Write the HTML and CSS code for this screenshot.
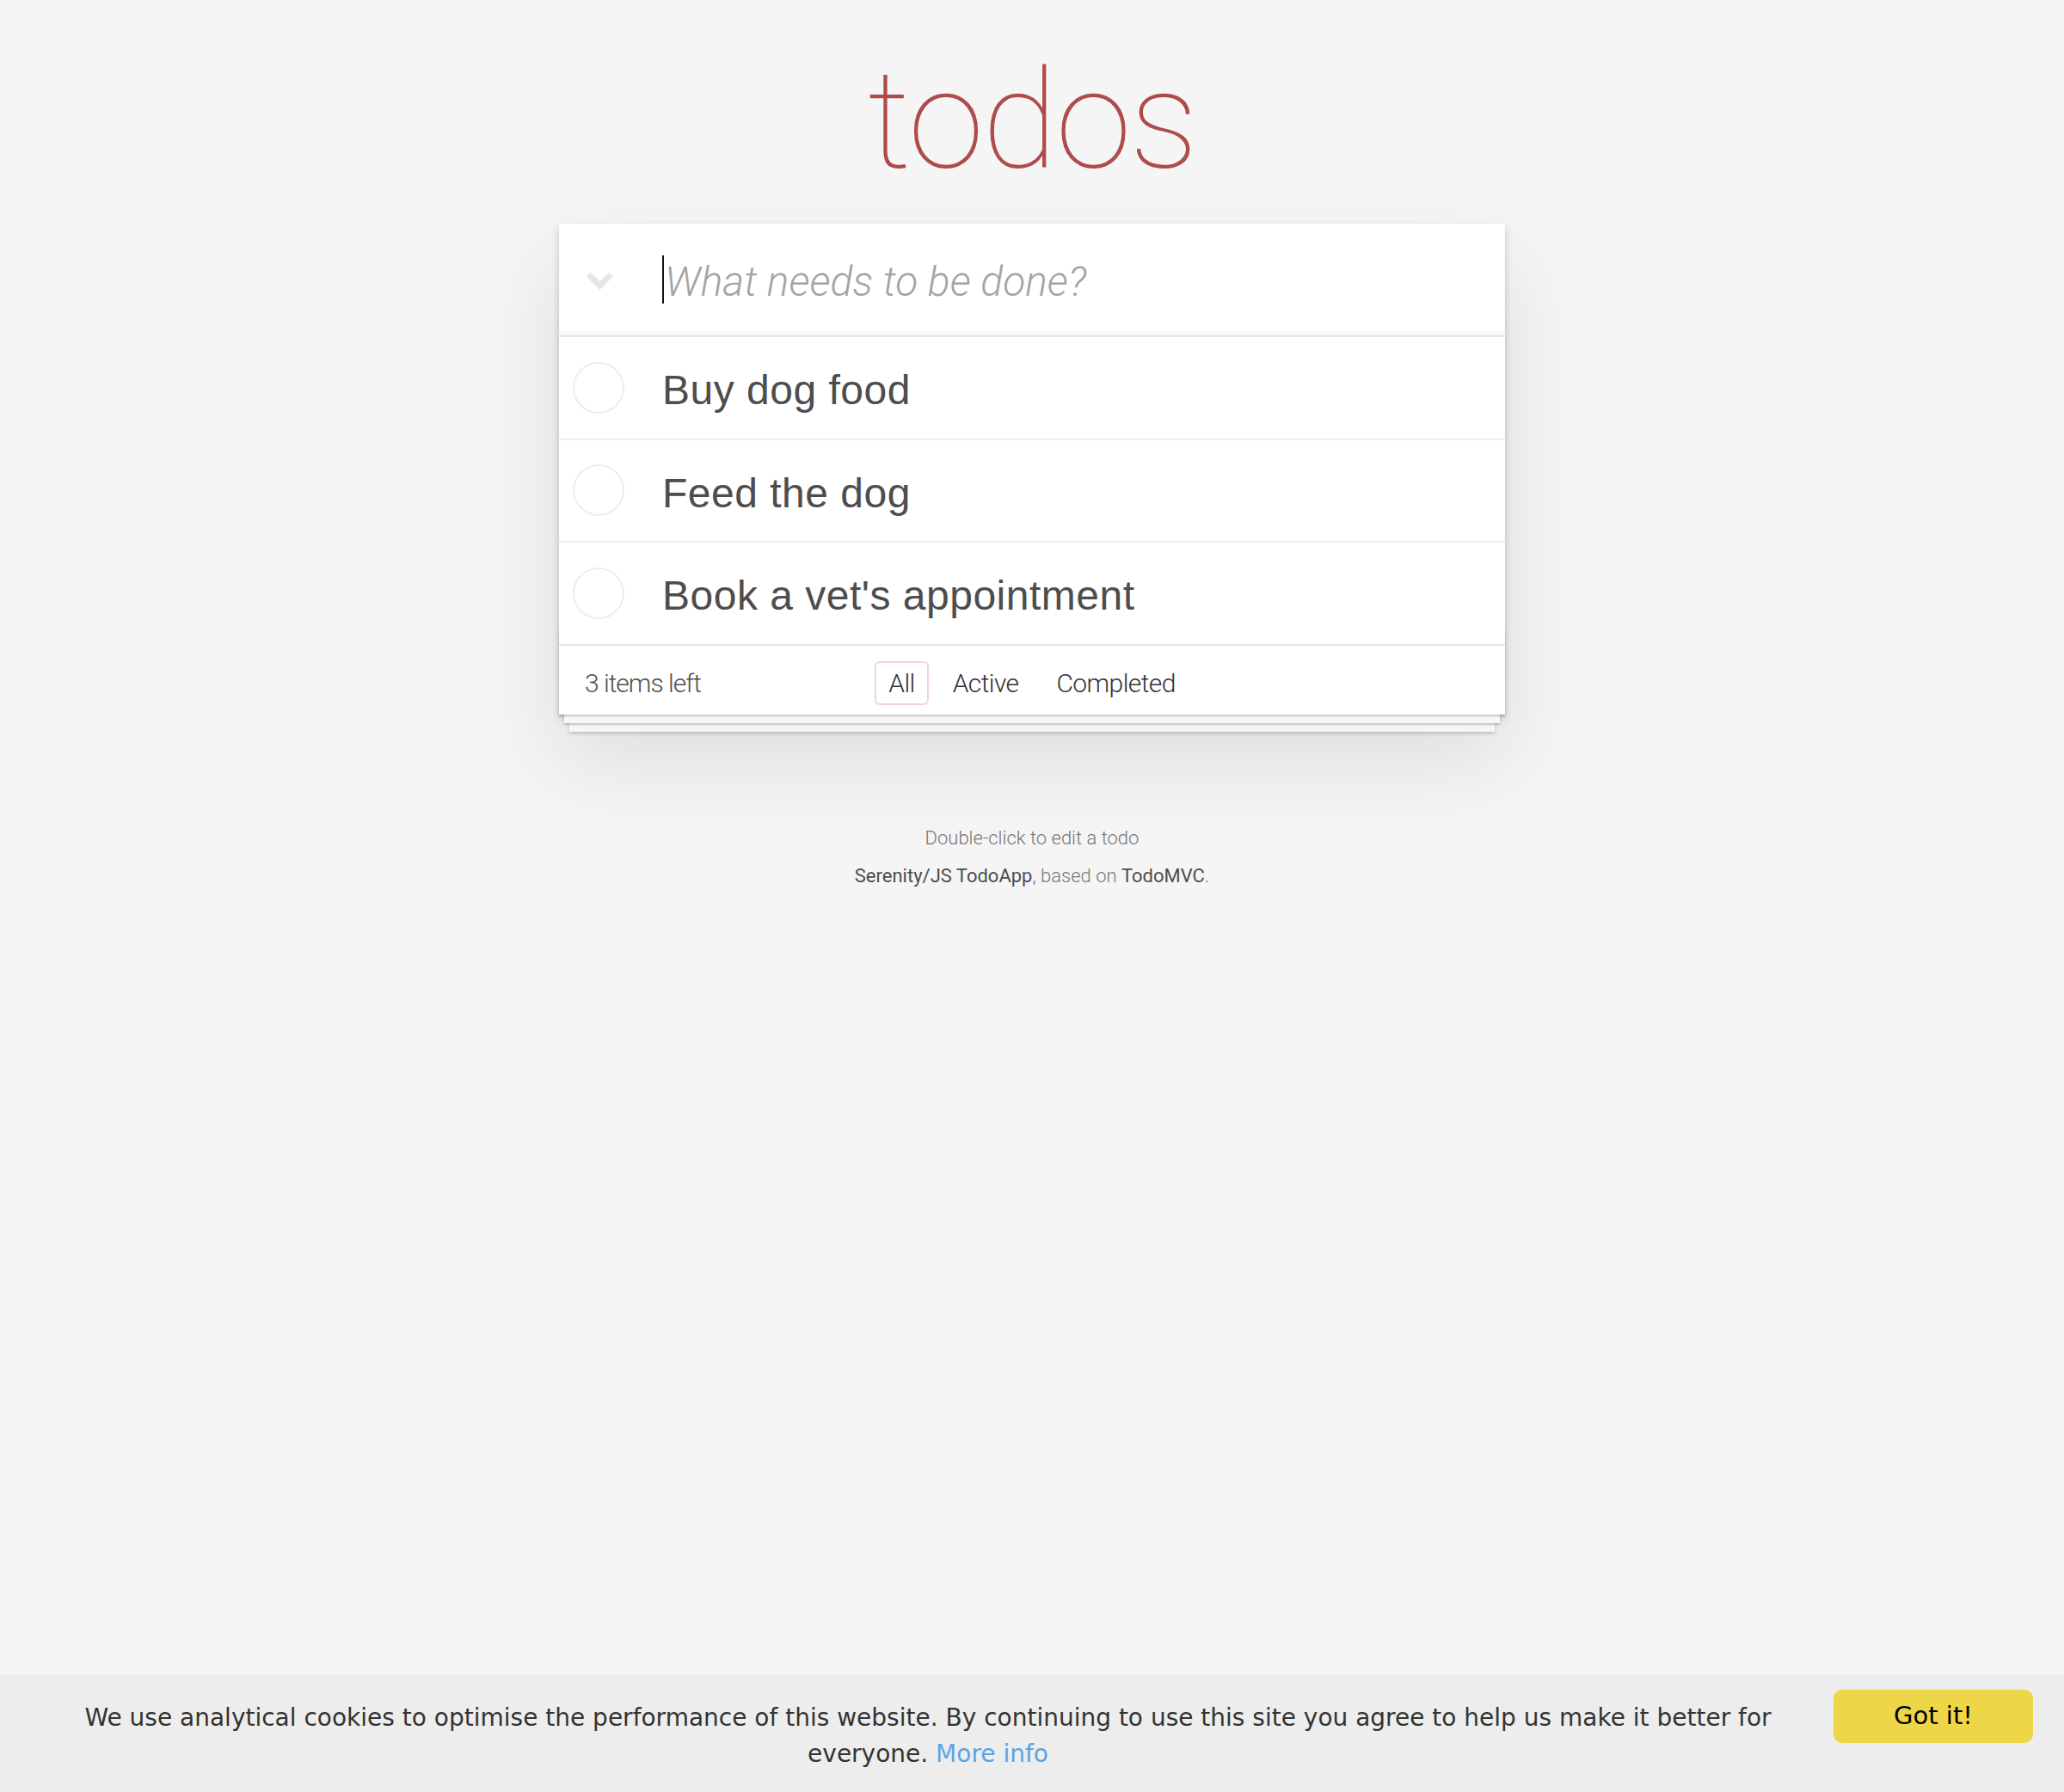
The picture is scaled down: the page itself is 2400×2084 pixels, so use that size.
FILE: index.html
```html
<!DOCTYPE html>
<html lang="en">
<head>
<meta charset="utf-8">
<title>Serenity/JS TodoApp</title>
<link rel="stylesheet" href="styles.css">
</head>
<body>
<div class="page">
  <h1 class="title">todos</h1>
  <section class="todoapp">
    <header class="header">
      <label class="toggle-all">
        <svg width="31" height="20" viewBox="0 0 31 20"><polygon points="0,4.5 4.5,0 15.5,10 26.5,0 31,4.5 15.5,20" fill="#e6e6e6"/></svg>
      </label>
      <div class="new-todo"><span class="caret"></span><span class="placeholder">What needs to be done?</span></div>
    </header>
    <ul class="todo-list">
      <li><span class="toggle"></span><label>Buy dog food</label></li>
      <li><span class="toggle"></span><label>Feed the dog</label></li>
      <li><span class="toggle"></span><label>Book a vet's appointment</label></li>
    </ul>
    <footer class="footer">
      <span class="todo-count">3 items left</span>
      <ul class="filters">
        <li><a class="selected">All</a></li>
        <li><a>Active</a></li>
        <li><a>Completed</a></li>
      </ul>
      <span></span>
    </footer>
  </section>
  <footer class="info">
    <p>Double-click to edit a todo</p>
    <p><a>Serenity/JS TodoApp</a>, based on <a>TodoMVC</a>.</p>
  </footer>
</div>
<div class="cc-banner">
  <p class="cc-message">We use analytical cookies to optimise the performance of this website. By continuing to use this site you agree to help us make it better for everyone. <a class="cc-link">More info</a></p>
  <a class="cc-btn">Got it!</a>
</div>
</body>
</html>
```
FILE: styles.css
```css
* { box-sizing: border-box; }
html, body { margin: 0; padding: 0; }
body {
  font-family: Roboto, "Liberation Sans", sans-serif;
  font-weight: 300;
  font-size: 28px;
  line-height: 39.2px;
  background: #f5f5f5;
  color: #4d4d4d;
}
.page { max-width: 1100px; margin: 0 auto; }
.title {
  margin: 60px 0 40px;
  height: 160px;
  font-size: 160px;
  line-height: 160px;
  font-weight: 100;
  text-align: center;
  color: #af4b4b;
  letter-spacing: -2px;
}
.todoapp {
  position: relative;
  background: #fff;
  box-shadow: 0 4px 8px 0 rgba(0,0,0,.2), 0 50px 100px 0 rgba(0,0,0,.1);
}
.header {
  display: flex;
  align-items: center;
  height: 130px;
  box-shadow: inset 0 -4px 2px rgba(0,0,0,.03);
}
.toggle-all {
  width: 94px;
  display: flex;
  justify-content: center;
  padding-top: 4px;
}
.toggle-all svg { display: block; }
.new-todo {
  display: flex;
  align-items: center;
  padding-left: 26px;
}
.caret { width: 2px; height: 56px; background: #111; }
.placeholder {
  font-style: italic;
  font-weight: 300;
  font-size: 48px;
  color: #a3a3a3;
  margin-left: 1px;
  padding-top: 5px;
}
.todo-list {
  margin: 0;
  padding: 0;
  list-style: none;
  border-top: 2px solid #e6e6e6;
}
.todo-list li {
  display: flex;
  align-items: center;
  border-bottom: 2px solid #ededed;
  font-size: 48px;
}
.todo-list li:last-child { border-bottom: none; }
.toggle {
  flex: none;
  width: 60px;
  height: 60px;
  margin-left: 16px;
  border: 2px solid #ededed;
  border-radius: 50%;
}
.todo-list label {
  padding: 33px 0 27px 44px;
  line-height: 1.2;
  font-family: "Liberation Sans", Arial, sans-serif;
  font-weight: 400;
  letter-spacing: 0.5px;
  color: #4d4d4d;
}
.footer {
  position: relative;
  height: 82px;
  padding: 24px 30px 16px;
  border-top: 2px solid #e6e6e6;
  display: grid;
  grid-template-columns: 1fr auto 1fr;
  align-items: center;
  font-size: 30px;
}
.footer::before {
  content: '';
  position: absolute;
  left: 0;
  right: 0;
  bottom: 0;
  height: 100px;
  pointer-events: none;
  box-shadow: 0 2px 2px rgba(0,0,0,.2),
              0 16px 0 -6px #f6f6f6,
              0 18px 2px -6px rgba(0,0,0,.2),
              0 32px 0 -12px #f6f6f6,
              0 34px 4px -12px rgba(0,0,0,.2);
}
.todo-count { justify-self: start; color: #505050; letter-spacing: -1px; }
.filters {
  display: flex;
  margin: 0;
  padding: 0;
  list-style: none;
  letter-spacing: -0.6px;
}
.filters a {
  margin: 6px;
  padding: 6px 14px;
  border: 2px solid transparent;
  border-radius: 6px;
  color: #333;
}
.filters a.selected { border-color: rgba(175,47,47,.2); }
.info {
  margin-top: 133px;
  font-size: 22px;
  text-align: center;
  color: #777;
}
.info p { margin: 0 0 22px; line-height: 1; }
.info a { color: #4d4d4d; font-weight: 400; }
.cc-banner {
  position: fixed;
  left: 0;
  right: 0;
  bottom: 0;
  height: 136px;
  display: flex;
  align-items: flex-start;
  padding: 17px 36px 0 58px;
  background: #ededed;
  font-family: "DejaVu Sans", sans-serif;
  font-weight: 400;
}
.cc-message {
  flex: 1;
  margin: 12px 32px 0 0;
  text-align: center;
  font-size: 28px;
  line-height: 42px;
  color: #333;
}
.cc-link { color: #5aa4e4; }
.cc-btn {
  flex: none;
  width: 232px;
  height: 62px;
  display: flex;
  align-items: center;
  justify-content: center;
  background: #edd748;
  border-radius: 10px;
  font-size: 29px;
  color: #000;
}
```
